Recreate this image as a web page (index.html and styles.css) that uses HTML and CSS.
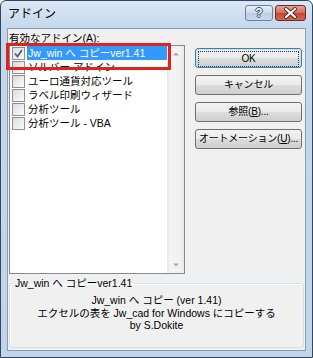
FILE: index.html
```html
<!DOCTYPE html>
<html lang="ja">
  <head>
    <meta charset="UTF-8" />
    <meta name="viewport" content="width=device-width, initial-scale=1.0" />
    <title>アドイン</title>
    <link rel="stylesheet" href="styles.css">
  </head>
  <body>
    <div class="window">
      <div class="titlebar">
        <span class="title">アドイン</span>
        <div class="caption-buttons">
          <span class="cap-btn help">?</span>
          <span class="cap-btn close">
            <svg width="29" height="14" viewBox="0 0 29 14">
              <path d="M10 3 L19 11 M19 3 L10 11" stroke="#5a2320" stroke-width="4" stroke-linecap="round" />
              <path d="M10 3 L19 11 M19 3 L10 11" stroke="#ffffff" stroke-width="2.2" stroke-linecap="round" />
            </svg>
          </span>
        </div>
      </div>

      <div class="client">
        <div class="main">
          <div class="list-col">
            <div class="label">有効なアドイン(<u>A</u>):</div>
            <div class="listbox">
              <ul class="items">
                <li class="item selected">
                  <span class="check">
                    <svg width="11" height="11" viewBox="0 0 11 11">
                      <path d="M2 5.5 L4.5 8.5 L9 2" fill="none" stroke="#4a5f86" stroke-width="1.8" />
                    </svg>
                  </span>
                  <span class="text">Jw_win へ コピーver1.41</span>
                </li>
                <li class="item"><span class="check"></span><span class="text">ソルバー アドイン</span></li>
                <li class="item"><span class="check"></span><span class="text">ユーロ通貨対応ツール</span></li>
                <li class="item"><span class="check"></span><span class="text">ラベル印刷ウィザード</span></li>
                <li class="item"><span class="check"></span><span class="text">分析ツール</span></li>
                <li class="item"><span class="check"></span><span class="text">分析ツール - VBA</span></li>
              </ul>
              <div class="scrollbar">
                <svg class="arrow" width="16" height="16" viewBox="0 0 16 16">
                  <path d="M5 9.5 L8 6.5 L11 9.5 Z" fill="#a8a8a8" />
                </svg>
                <svg class="arrow" width="16" height="16" viewBox="0 0 16 16">
                  <path d="M5 6.5 L8 9.5 L11 6.5 Z" fill="#a8a8a8" />
                </svg>
              </div>
            </div>
          </div>

          <div class="buttons">
            <button class="btn default"><span class="focus">OK</span></button>
            <button class="btn">キャンセル</button>
            <button class="btn">参照(<u>B</u>)...</button>
            <button class="btn">オートメーション(<u>U</u>)...</button>
          </div>
        </div>

        <fieldset class="group">
          <legend>Jw_win へ コピーver1.41</legend>
          <p>Jw_win へ コピー (ver 1.41)<br>エクセルの表を Jw_cad for Windows にコピーする<br>by S.Dokite</p>
        </fieldset>
      </div>

      <div class="marker"></div>
    </div>
  </body>
</html>
```

FILE: styles.css
```css
body {
  margin: 0;
  padding: 0;
  background-color: #ffffff;
  font-family: "Liberation Sans", "Noto Sans CJK JP", sans-serif;
  font-size: 10.5px;
  color: #000000;
}
.window {
  position: relative;
  width: 313px;
  height: 358px;
  box-sizing: border-box;
  border: 1px solid #34465a;
  border-radius: 6px 6px 0 0;
  background: linear-gradient(#dbe7f5, #c4d7ed 27px, #c0d4eb);
  padding: 0 6px 6px;
  display: flex;
  flex-direction: column;
}
.titlebar {
  height: 27px;
  display: flex;
  justify-content: space-between;
  align-items: flex-start;
  flex-shrink: 0;
}
.title {
  padding-left: 1px;
  font-family: "Noto Sans CJK JP", sans-serif;
  font-size: 12px;
  line-height: 24px;
}
.caption-buttons {
  display: flex;
  gap: 2px;
  margin-top: 4px;
}
.cap-btn {
  height: 16px;
  box-sizing: border-box;
  border-radius: 3px;
  display: flex;
  align-items: center;
  justify-content: center;
}
.help {
  width: 28px;
  border: 1px solid #6d8199;
  background: linear-gradient(#e6eef8, #cbdaec 50%, #b9cce4 50%, #c9daee);
  color: #f4f6f8;
  font-family: "Liberation Sans", sans-serif;
  font-size: 12px;
  font-weight: bold;
  text-shadow: 1px 0 #3a4f6a, -1px 0 #3a4f6a, 0 1px #3a4f6a, 0 -1px #3a4f6a;
}
.close {
  width: 31px;
  border: 1px solid #6d2b27;
  background: linear-gradient(#e5a294, #d66b5c 50%, #c74734 50%, #d0674f);
}
.client {
  flex: 1;
  border: 1px solid #8b9db3;
  background-color: #f0f0f0;
  padding: 2px 0 0 0;
  display: flex;
  flex-direction: column;
}
.main {
  display: flex;
}
.list-col {
  margin-left: 1px;
  width: 176px;
}
.label {
  height: 14px;
  line-height: 14px;
}
.listbox {
  height: 229px;
  box-sizing: border-box;
  border: 1px solid #828790;
  background-color: #ffffff;
  display: flex;
}
.items {
  flex: 1;
  list-style: none;
  margin: 0;
  padding: 0;
}
.item {
  height: 14px;
  display: flex;
  align-items: center;
  line-height: 14px;
  white-space: nowrap;
}
.check {
  width: 13px;
  height: 13px;
  box-sizing: border-box;
  margin-left: 2px;
  margin-right: 2px;
  border: 1px solid #8e8f8f;
  background: linear-gradient(135deg, #dcdcdc, #fbfbfb);
  display: flex;
  align-items: center;
  justify-content: center;
  flex-shrink: 0;
}
.text {
  padding: 0 2px 0 1px;
}
.selected .text {
  flex: 1;
  background-color: #3399ff;
  color: #ffffff;
}
.scrollbar {
  width: 17px;
  background: linear-gradient(to right, #e6e6e6, #f5f5f5 3px, #f0f0f0 14px, #e8e8e8);
  display: flex;
  flex-direction: column;
  justify-content: space-between;
  align-items: center;
}
.arrow {
  display: block;
}
.buttons {
  margin-left: 10px;
  margin-top: 17px;
  width: 107px;
  display: flex;
  flex-direction: column;
  gap: 7px;
}
.btn {
  height: 20px;
  padding: 0;
  border: 1px solid #707070;
  border-radius: 3px;
  background: linear-gradient(#f2f2f2, #ebebeb 50%, #dddddd 50%, #cfcfcf);
  font-family: "Liberation Sans", "Noto Sans CJK JP", sans-serif;
  font-size: 10px;
  letter-spacing: -0.2px;
  white-space: nowrap;
  color: #000000;
  line-height: 16px;
}
.btn.default {
  border-color: #3c7fb1;
  box-shadow: inset 0 0 0 1px #bfe3f7;
  padding: 2px;
}
.focus {
  display: block;
  height: 14px;
  line-height: 14px;
  border: 1px dotted #333333;
}
.group {
  flex: 1;
  margin: 3px 1px 2px 1px;
  padding: 0;
  border: 1px solid #d5dfe5;
  border-radius: 3px;
  box-shadow: inset 1px 1px #ffffff;
  min-width: 0;
}
.group legend {
  margin-left: 3px;
  padding: 0 2px;
  line-height: 13px;
}
.group p {
  margin: 4px 0 0;
  text-align: center;
  line-height: 12.5px;
}
.marker {
  position: absolute;
  left: 5px;
  top: 42px;
  width: 165px;
  height: 27px;
  box-sizing: border-box;
  border: 3px solid #e0231c;
}
```
